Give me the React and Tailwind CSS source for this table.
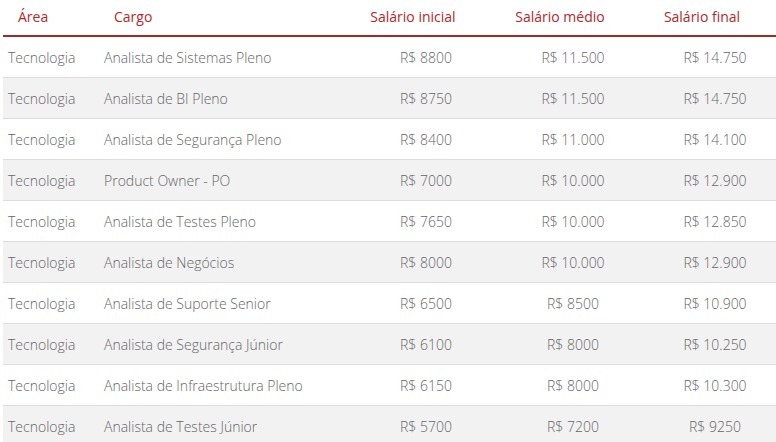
import React from "react";

const rows = [
  ["Tecnologia", "Analista de Sistemas Pleno", "R$ 8800", "R$ 11.500", "R$ 14.750"],
  ["Tecnologia", "Analista de BI Pleno", "R$ 8750", "R$ 11.500", "R$ 14.750"],
  ["Tecnologia", "Analista de Segurança Pleno", "R$ 8400", "R$ 11.000", "R$ 14.100"],
  ["Tecnologia", "Product Owner - PO", "R$ 7000", "R$ 10.000", "R$ 12.900"],
  ["Tecnologia", "Analista de Testes Pleno", "R$ 7650", "R$ 10.000", "R$ 12.850"],
  ["Tecnologia", "Analista de Negócios", "R$ 8000", "R$ 10.000", "R$ 12.900"],
  ["Tecnologia", "Analista de Suporte Senior", "R$ 6500", "R$ 8500", "R$ 10.900"],
  ["Tecnologia", "Analista de Segurança Júnior", "R$ 6100", "R$ 8000", "R$ 10.250"],
  ["Tecnologia", "Analista de Infraestrutura Pleno", "R$ 6150", "R$ 8000", "R$ 10.300"],
  ["Tecnologia", "Analista de Testes Júnior", "R$ 5700", "R$ 7200", "R$ 9250"],
];

const App = () => {
  return (
    <div
      className="bg-white w-[776px] h-[442px] overflow-hidden pl-[3px]"
      style={{ fontFamily: '"Open Sans", "Liberation Sans", sans-serif' }}
    >
      {/* header */}
      <div className="flex w-[780px] h-[37px] items-center pb-[2px] text-[14px] text-[#b3292b] border-b-2 border-[#a3282a]">
        <div className="w-[96px] shrink-0 pl-[15px]">Área</div>
        <div className="w-[254px] shrink-0 pl-[15px]">Cargo</div>
        <div className="w-[146px] shrink-0 text-center pr-[26px]">Salário inicial</div>
        <div className="w-[148px] shrink-0 text-center pr-[26px]">Salário médio</div>
        <div className="w-[136px] shrink-0 text-center pr-[26px]">Salário final</div>
      </div>

      {rows.map((r, i) => (
        <div
          key={i}
          className={`flex w-[780px] h-[41px] items-center text-[14px] font-light text-[#666666] border-b border-[#dddddd] ${
            i % 2 === 1 ? "bg-[#f2f2f2]" : "bg-white"
          }`}
        >
          <div className="w-[96px] shrink-0 pl-[5px]">{r[0]}</div>
          <div className="w-[254px] shrink-0 pl-[5px]">{r[1]}</div>
          <div className="w-[146px] shrink-0 text-center">{r[2]}</div>
          <div className="w-[148px] shrink-0 text-center">{r[3]}</div>
          <div className="w-[136px] shrink-0 text-center">{r[4]}</div>
        </div>
      ))}
    </div>
  );
};

export default App;
